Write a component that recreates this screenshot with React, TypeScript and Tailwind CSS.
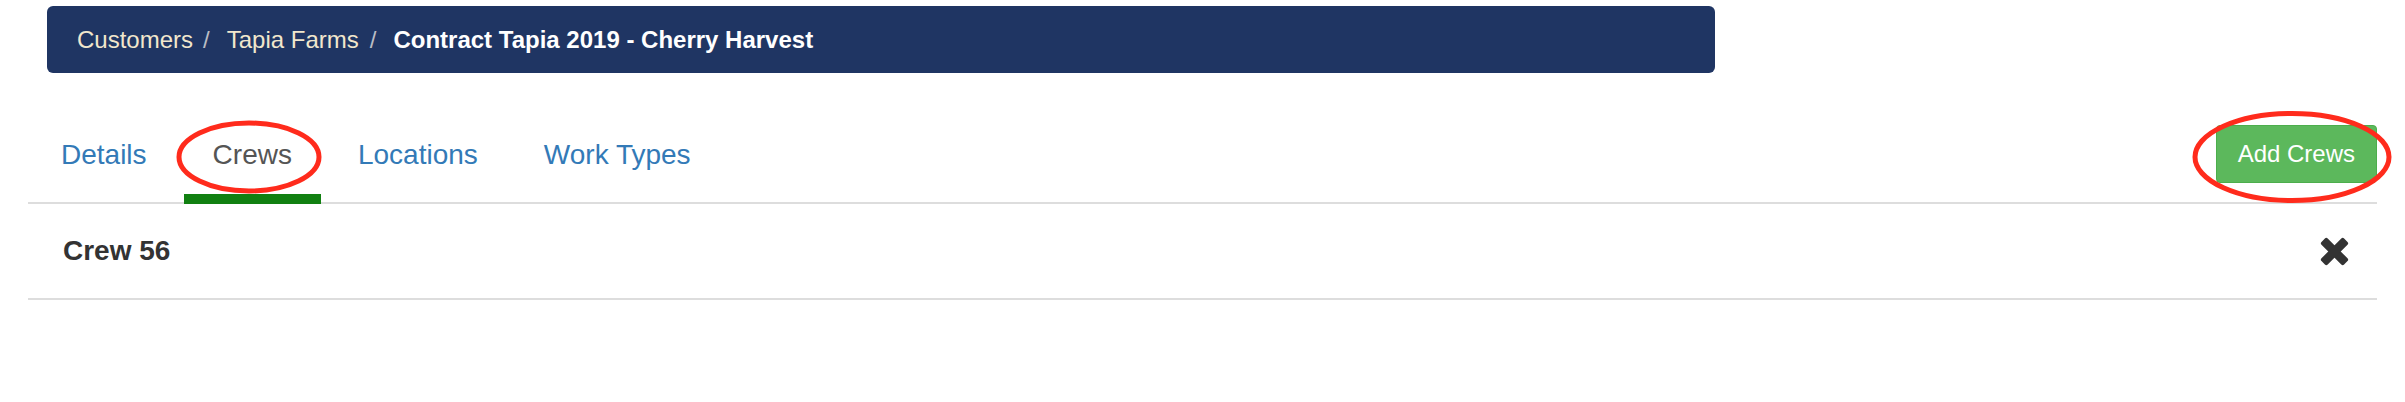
import React from "react";

const tabs = [
  { label: "Details", active: false },
  { label: "Crews", active: true },
  { label: "Locations", active: false },
  { label: "Work Types", active: false },
];

const crews = [{ id: 56, name: "Crew 56" }];

function RemoveIcon() {
  return (
    <svg width="29" height="29" viewBox="0 0 29 29" className="shrink-0">
      <g fill="#333333" transform="translate(14.5 14.5)">
        <rect x="-16" y="-4.4" width="32" height="8.8" rx="2" transform="rotate(45)" />
        <rect x="-16" y="-4.4" width="32" height="8.8" rx="2" transform="rotate(-45)" />
      </g>
    </svg>
  );
}

export default function App() {
  return (
    <div className="relative w-[2405px] h-[402px] bg-white font-['Liberation_Sans',Arial,sans-serif]">
      {/* breadcrumb */}
      <div className="mt-[6px] ml-[47px] w-[1668px] h-[67px] rounded-[6px] bg-[#1f3563] flex items-center pl-[30px] text-[24px]">
        <span className="text-[#f1e7cd]">Customers</span>
        <span className="ml-[10px] mr-[17px] text-[#b9bcc4]">/</span>
        <span className="text-[#f1e7cd]">Tapia Farms</span>
        <span className="ml-[11px] mr-[17px] text-[#b9bcc4]">/</span>
        <span className="text-white font-bold">Contract Tapia 2019 - Cherry Harvest</span>
      </div>

      <div className="mx-[28px]">
        {/* tabs + action */}
        <div className="mt-[52px] flex items-start justify-between border-b-2 border-[#dddddd]">
          <ul className="ml-[4px] pt-[10px] flex gap-[8px] -mb-[2px]">
            {tabs.map((t) => (
              <li
                key={t.label}
                className={`px-[29px] pb-[19px] text-[28px] leading-[40px] border-b-[10px] ${
                  t.active ? "text-[#555555] border-[#118011]" : "text-[#337ab7] border-transparent"
                }`}
              >
                {t.label}
              </li>
            ))}
          </ul>
          <button className="h-[58px] px-[21px] flex items-center rounded-[4px] border border-[#4cae4c] bg-[#5cb85c] text-white text-[24px]">
            Add Crews
          </button>
        </div>

        {/* crew list */}
        {crews.map((c) => (
          <div
            key={c.id}
            className="h-[96px] flex items-center justify-between pl-[35px] pr-[28px] border-b-2 border-[#dddddd]"
          >
            <span className="text-[28px] font-bold text-[#333333]">{c.name}</span>
            <RemoveIcon />
          </div>
        ))}
      </div>

      {/* annotation marks */}
      <svg className="absolute left-[174px] top-[112px]" width="150" height="80">
        <ellipse cx="75" cy="39" rx="70" ry="34" fill="none" stroke="#ff2b1c" strokeWidth="5" />
      </svg>
      <svg className="absolute left-[2189px] top-[102px]" width="206" height="98">
        <ellipse cx="103" cy="49" rx="97" ry="43.5" fill="none" stroke="#ff2b1c" strokeWidth="5" />
      </svg>
    </div>
  );
}
